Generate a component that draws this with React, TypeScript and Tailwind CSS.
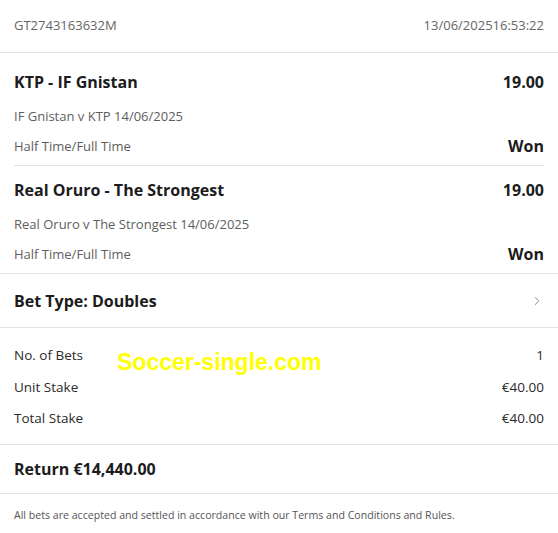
import { ChevronRight } from 'lucide-react';

const font = { fontFamily: '"Open Sans", "Noto Sans", sans-serif' };

function Selection({
  title,
  event,
  market,
  odds,
  result,
  first,
}: {
  title: string;
  event: string;
  market: string;
  odds: string;
  result: string;
  first?: boolean;
}) {
  return (
    <div className={`${first ? 'pt-[17px]' : 'pt-[12px]'} pb-[7px]`}>
      <div className="flex items-center justify-between leading-[24px]">
        <span className="text-[16px] font-bold text-[#1c1c1c]">{title}</span>
        <span className="text-[16px] font-bold text-[#1c1c1c]">{odds}</span>
      </div>
      <div className="mt-[10px] text-[13px] leading-[24px] text-[#5e5e5e]">{event}</div>
      <div className="mt-[6px] flex items-center justify-between leading-[24px]">
        <span className="text-[13px] text-[#5e5e5e]">{market}</span>
        <span className="text-[16px] font-bold text-[#1c1c1c]">{result}</span>
      </div>
    </div>
  );
}

export default function App() {
  return (
    <div className="relative min-h-[533px] w-[558px] bg-white" style={font}>
      <div className="flex h-[53px] items-center justify-between border-b border-[#e3e3e3] px-[14px] text-[13px] text-[#666]">
        <span>GT2743163632M</span>
        <span>13/06/202516:53:22</span>
      </div>

      <div className="px-[14px]">
        <div className="border-b border-[#e3e3e3]">
          <Selection
            first
            title="KTP - IF Gnistan"
            event="IF Gnistan v KTP 14/06/2025"
            market="Half Time/Full Time"
            odds="19.00"
            result="Won"
          />
        </div>
        <Selection
          title="Real Oruro - The Strongest"
          event="Real Oruro v The Strongest 14/06/2025"
          market="Half Time/Full Time"
          odds="19.00"
          result="Won"
        />
      </div>

      <div className="flex h-[55px] items-center justify-between border-y border-[#e3e3e3] px-[14px]">
        <span className="text-[16px] font-bold text-[#1c1c1c]">Bet Type: Doubles</span>
        <ChevronRight size={14} strokeWidth={1.5} className="text-[#777]" />
      </div>

      <div className="border-b border-[#e3e3e3] px-[14px] pt-[15px] pb-[14px] text-[13.5px] text-[#2a2a2a]">
        <div className="flex justify-between leading-[24px]">
          <span>No. of Bets</span>
          <span>1</span>
        </div>
        <div className="mt-[8px] flex justify-between leading-[24px]">
          <span>Unit Stake</span>
          <span>€40.00</span>
        </div>
        <div className="mt-[7px] flex justify-between leading-[24px]">
          <span>Total Stake</span>
          <span>€40.00</span>
        </div>
      </div>

      <div className="flex h-[49px] items-center border-b border-[#e3e3e3] px-[14px]">
        <span className="text-[16px] font-bold text-[#1c1c1c]">Return €14,440.00</span>
      </div>

      <div className="px-[14px] pt-[12px] text-[10.6px] leading-[18px] text-[#555]">
        All bets are accepted and settled in accordance with our Terms and Conditions and Rules.
      </div>

      <div
        className="absolute left-[117px] top-[347px] text-[23px] font-bold leading-[30px] text-[#ffff00]"
        style={{ fontFamily: '"Liberation Sans", Arial, sans-serif' }}
      >
        Soccer-single.com
      </div>
    </div>
  );
}
